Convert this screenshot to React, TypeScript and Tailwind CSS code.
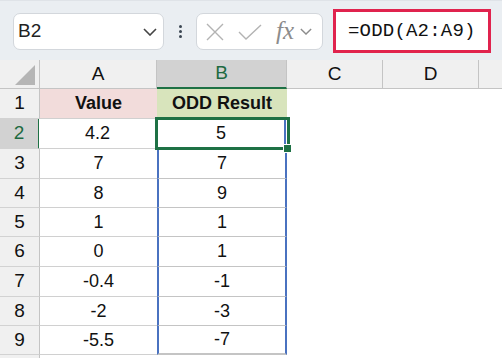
import React from 'react';

const rows = [
    { n: 1, a: 'Value', b: 'ODD Result', h: 30 },
    { n: 2, a: '4.2', b: '5', h: 30 },
    { n: 3, a: '7', b: '7', h: 30 },
    { n: 4, a: '8', b: '9', h: 29 },
    { n: 5, a: '1', b: '1', h: 29 },
    { n: 6, a: '0', b: '1', h: 30 },
    { n: 7, a: '-0.4', b: '-1', h: 30 },
    { n: 8, a: '-2', b: '-3', h: 29 },
    { n: 9, a: '-5.5', b: '-7', h: 29 },
];

const Chevron = ({ className }: { className?: string }) => (
    <svg viewBox="0 0 14 8" className={className} fill="none" stroke="currentColor" strokeWidth="1.6">
        <path d="M1 1l6 6 6-6" />
    </svg>
);

const FormulaBar = () => (
    <div className="h-[60px] bg-[#eaeef2] border-t border-[#dfe3e8] flex items-start">
        {/* name box */}
        <div className="ml-[13px] mt-[12px] w-[151px] h-[37px] bg-white border border-[#d3d7dc] rounded-[7px] flex items-center justify-between pl-[4px] pr-[6px]">
            <span className="text-[19px] text-[#222]">B2</span>
            <Chevron className="w-[14px] h-[8px] text-[#444]" />
        </div>
        <div className="w-[32px] h-[60px] flex flex-col items-center justify-center gap-[2px]">
            <span className="w-[3px] h-[3px] rounded-full bg-[#3b4652]" />
            <span className="w-[3px] h-[3px] rounded-full bg-[#3b4652]" />
            <span className="w-[3px] h-[3px] rounded-full bg-[#3b4652]" />
        </div>
        {/* cancel / enter / fx */}
        <div className="mt-[12px] w-[127px] h-[37px] bg-white border border-[#d3d7dc] rounded-[7px] flex items-center pl-[9px]">
            <svg viewBox="0 0 18 18" className="w-[18px] h-[18px] text-[#b3b3b3]" fill="none" stroke="currentColor" strokeWidth="1.4">
                <path d="M1 1l16 16M17 1L1 17" />
            </svg>
            <svg viewBox="0 0 24 16" className="ml-[14px] w-[24px] h-[16px] text-[#b3b3b3]" fill="none" stroke="currentColor" strokeWidth="1.4">
                <path d="M1 8l7 7L23 1" />
            </svg>
            <span className="ml-[14px] text-[25px] italic text-[#8c8c8c] leading-none -mt-[3px]" style={{ fontFamily: '"Liberation Serif", serif' }}>fx</span>
            <Chevron className="ml-[6px] w-[12px] h-[7px] text-[#8c8c8c]" />
        </div>
        {/* formula input, highlighted */}
        <div className="ml-[10px] mt-[8px] w-[158px] h-[44px] bg-white border-[3px] border-[#e0234e] flex items-center pl-[12px]">
            <span className="text-[19px] text-[#111] tracking-[0.2px]" style={{ fontFamily: '"Liberation Mono", monospace' }}>=ODD(A2:A9)</span>
        </div>
    </div>
);

export default function App() {
    return (
        <div className="w-[502px] h-[358px] overflow-hidden bg-white text-[#111]" style={{ fontFamily: '"Liberation Sans", Arial, sans-serif' }}>
            <FormulaBar />

            {/* column headers */}
            <div className="flex h-[29px] bg-[#f0f0f0] border-b border-[#c4c4c4] text-[19px]">
                <div className="w-[40px] border-r border-[#c4c4c4] relative">
                    <svg viewBox="0 0 20 20" className="absolute right-[4px] bottom-[3px] w-[20px] h-[20px]">
                        <path d="M20 0V20H0Z" fill="#b5b5b5" />
                    </svg>
                </div>
                <div className="w-[117px] border-r border-[#c4c4c4] flex items-center justify-center">A</div>
                <div className="w-[130px] bg-[#d2d2d2] border-r border-[#c4c4c4] border-b-2 border-b-[#1e7145] -mb-px flex items-center justify-center text-[#1e6a41]">B</div>
                <div className="w-[96px] border-r border-[#c4c4c4] flex items-center justify-center">C</div>
                <div className="w-[96px] border-r border-[#c4c4c4] flex items-center justify-center">D</div>
                <div className="flex-1" />
            </div>

            {/* grid */}
            <div className="relative">
                {rows.map((r) => {
                    const head = r.n === 1;
                    const sel = r.n === 2;
                    return (
                        <div key={r.n} className="flex text-[18px]" style={{ height: r.h }}>
                            <div className={`w-[40px] flex items-center justify-center border-b border-[#d2d2d2] text-[19px] ${sel ? 'bg-[#d2d2d2] text-[#1e6a41] border-r-2 border-r-[#1e7145]' : 'bg-[#f0f0f0] border-r border-r-[#c4c4c4]'}`}>
                                {r.n}
                            </div>
                            <div className={`w-[117px] flex items-center justify-center border-b border-[#d0d0d0] ${head ? 'bg-[#f2dcdb] font-bold' : 'bg-white'} ${sel ? '-ml-px' : ''}`}>
                                {r.a}
                            </div>
                            <div className={`w-[130px] flex items-center justify-center ${head ? 'bg-[#d8e4bc] font-bold border-b border-[#d0d0d0]' : 'bg-white border-x-2 border-[#4a72c0] border-b border-b-[#c4c4c4]'} ${r.n === 9 ? 'border-b-2 border-b-[#4a72c0]' : ''}`}>
                                {r.b}
                            </div>
                            <div className="flex-1 bg-white" />
                        </div>
                    );
                })}
                <div className="flex h-[10px]">
                    <div className="w-[40px] bg-[#f0f0f0] border-r border-[#c4c4c4]" />
                </div>

                {/* active cell B2 */}
                <div className="absolute left-[155px] top-[28px] w-[135px] h-[33px] border-[3px] border-[#1e7145] pointer-events-none" />
                <div className="absolute left-[283px] top-[55px] w-[9px] h-[9px] bg-[#1e7145] border border-white" />
            </div>
        </div>
    );
}
